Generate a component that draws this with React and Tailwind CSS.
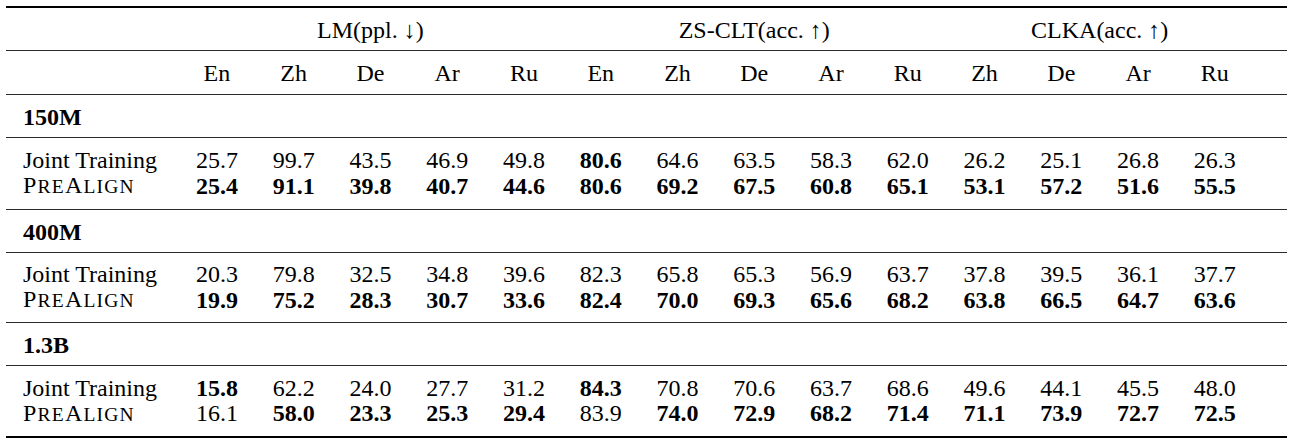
import React from 'react';

const langs = ['En', 'Zh', 'De', 'Ar', 'Ru', 'En', 'Zh', 'De', 'Ar', 'Ru', 'Zh', 'De', 'Ar', 'Ru'];

// a trailing * marks a bold (best) value
const sections = [
  {
    size: '150M',
    rows: [
      ['25.7', '99.7', '43.5', '46.9', '49.8', '80.6*', '64.6', '63.5', '58.3', '62.0', '26.2', '25.1', '26.8', '26.3'],
      ['25.4*', '91.1*', '39.8*', '40.7*', '44.6*', '80.6*', '69.2*', '67.5*', '60.8*', '65.1*', '53.1*', '57.2*', '51.6*', '55.5*']
    ],
    h: 'h-[71px]'
  },
  {
    size: '400M',
    rows: [
      ['20.3', '79.8', '32.5', '34.8', '39.6', '82.3', '65.8', '65.3', '56.9', '63.7', '37.8', '39.5', '36.1', '37.7'],
      ['19.9*', '75.2*', '28.3*', '30.7*', '33.6*', '82.4*', '70.0*', '69.3*', '65.6*', '68.2*', '63.8*', '66.5*', '64.7*', '63.6*']
    ],
    h: 'h-[69px]'
  },
  {
    size: '1.3B',
    rows: [
      ['15.8*', '62.2', '24.0', '27.7', '31.2', '84.3*', '70.8', '70.6', '63.7', '68.6', '49.6', '44.1', '45.5', '48.0'],
      ['16.1', '58.0*', '23.3*', '25.3*', '29.4*', '83.9', '74.0*', '72.9*', '68.2*', '71.4*', '71.1*', '73.9*', '72.7*', '72.5*']
    ],
    h: 'h-[70px]'
  }
];

const grid = 'grid grid-cols-[172.5px_repeat(14,76.77px)_1fr] items-center';

function Rule() {
  return <div className="h-px bg-[#2a2a2a]" />;
}

function PreAlign() {
  return (
    <span className="tracking-[1.2px]">
      P<span className="text-[19.5px]">RE</span>A<span className="text-[19.5px]">LIGN</span>
    </span>
  );
}

function Cell({ v }) {
  const bold = v.endsWith('*');
  return <div className={`text-center ${bold ? 'font-bold' : ''}`}>{bold ? v.slice(0, -1) : v}</div>;
}

export default function App() {
  return (
    <div className="min-h-screen bg-white pt-[6px] text-black">
      <div className="ml-[6px] w-[1281px] font-['Liberation_Serif','Times_New_Roman',serif] text-[24px] leading-[25px]">
        <div className="h-[2px] bg-black" />
        <div className={`${grid} h-[42px] pt-[3px]`}>
          <div />
          <div className="col-span-5 text-center">LM(ppl. ↓)</div>
          <div className="col-span-5 text-center">ZS-CLT(acc. ↑)</div>
          <div className="col-span-4 text-center">CLKA(acc. ↑)</div>
        </div>
        <Rule />
        <div className={`${grid} h-[43px] pt-[2px]`}>
          <div />
          {langs.map((l, i) => (
            <div key={i} className="text-center">
              {l}
            </div>
          ))}
        </div>
        {sections.map((s) => (
          <React.Fragment key={s.size}>
            <Rule />
            <div className="flex h-[42px] items-center pl-[17px] pt-[3px] font-bold">{s.size}</div>
            <Rule />
            <div className={`flex flex-col justify-center ${s.h}`}>
              {s.rows.map((r, ri) => (
                <div key={ri} className={grid}>
                  <div className="pl-[17px]">{ri === 0 ? 'Joint Training' : <PreAlign />}</div>
                  {r.map((v, i) => (
                    <Cell key={i} v={v} />
                  ))}
                </div>
              ))}
            </div>
          </React.Fragment>
        ))}
        <div className="h-[2px] bg-black" />
      </div>
    </div>
  );
}
